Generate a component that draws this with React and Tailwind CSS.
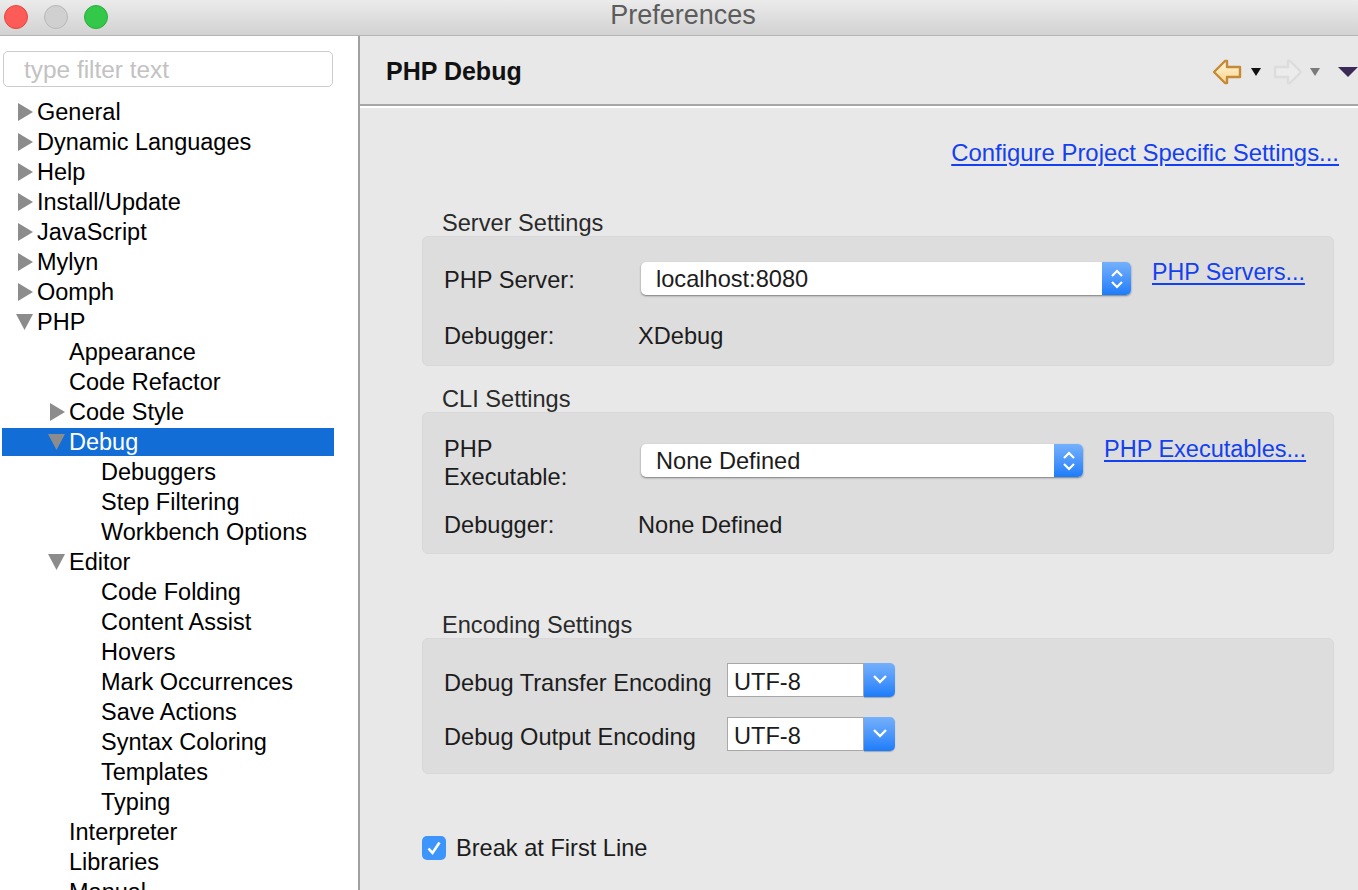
import React from 'react';

const TREE = [
  { label: 'General', depth: 0, arrow: 'right' },
  { label: 'Dynamic Languages', depth: 0, arrow: 'right' },
  { label: 'Help', depth: 0, arrow: 'right' },
  { label: 'Install/Update', depth: 0, arrow: 'right' },
  { label: 'JavaScript', depth: 0, arrow: 'right' },
  { label: 'Mylyn', depth: 0, arrow: 'right' },
  { label: 'Oomph', depth: 0, arrow: 'right' },
  { label: 'PHP', depth: 0, arrow: 'down' },
  { label: 'Appearance', depth: 1 },
  { label: 'Code Refactor', depth: 1 },
  { label: 'Code Style', depth: 1, arrow: 'right' },
  { label: 'Debug', depth: 1, arrow: 'down', selected: true },
  { label: 'Debuggers', depth: 2 },
  { label: 'Step Filtering', depth: 2 },
  { label: 'Workbench Options', depth: 2 },
  { label: 'Editor', depth: 1, arrow: 'down' },
  { label: 'Code Folding', depth: 2 },
  { label: 'Content Assist', depth: 2 },
  { label: 'Hovers', depth: 2 },
  { label: 'Mark Occurrences', depth: 2 },
  { label: 'Save Actions', depth: 2 },
  { label: 'Syntax Coloring', depth: 2 },
  { label: 'Templates', depth: 2 },
  { label: 'Typing', depth: 2 },
  { label: 'Interpreter', depth: 1 },
  { label: 'Libraries', depth: 1 },
  { label: 'Manual', depth: 1 },
];

const INDENT = ['pl-[14px]', 'pl-[46px]', 'pl-[78px]'];

function Arrow({ dir }) {
  return (
    <svg width="18" height="18" viewBox="0 0 18 18" className="shrink-0">
      {dir === 'right' && <path d="M2 0 L17 9 L2 18 Z" fill="#8c8c8c" />}
      {dir === 'down' && <path d="M0 1 L17 1 L8.5 17 Z" fill="#8c8c8c" />}
    </svg>
  );
}

function TreeRow({ item }) {
  const tone = item.selected ? 'bg-[#136dd6] text-white' : 'text-black';
  return (
    <div className="h-[30px] py-px">
      <div className={`h-[28px] flex items-center gap-[3px] text-[23.5px] ${INDENT[item.depth]} ${tone}`}>
        {item.arrow ? <Arrow dir={item.arrow} /> : <div className="w-[18px] shrink-0" />}
        <span>{item.label}</span>
      </div>
    </div>
  );
}

function Stepper({ width }) {
  return (
    <div className={`${width} h-full rounded-r-[5px] bg-gradient-to-b from-[#74b0fb] to-[#1a7cfa] flex items-center justify-center shrink-0`}>
      <svg width="14" height="24" viewBox="0 0 14 24" fill="none" stroke="white" strokeWidth="2.2">
        <path d="M2 9 L7 4 L12 9" />
        <path d="M2 15 L7 20 L12 15" />
      </svg>
    </div>
  );
}

function PopupSelect({ value, width }) {
  return (
    <div className={`${width} h-[33px] flex rounded-[5px] bg-white shadow-[0_1px_2px_rgba(0,0,0,0.45)] shrink-0`}>
      <div className="flex-1 pl-[15px] flex items-center text-[#1c1c1c]">{value}</div>
      <Stepper width="w-[29px]" />
    </div>
  );
}

function ComboSelect({ value }) {
  return (
    <div className="w-[168px] h-[34px] flex">
      <div className="flex-1 pl-[6px] pt-[4px] flex items-center bg-white border border-[#a8a8a8] text-[#1c1c1c]">{value}</div>
      <div className="w-[31px] rounded-r-[5px] bg-gradient-to-b from-[#74b0fb] to-[#1a7cfa] flex items-center justify-center shadow-[0_1px_1px_rgba(0,0,0,0.25)]">
        <svg width="16" height="12" viewBox="0 0 16 12" fill="none" stroke="white" strokeWidth="2.4" className="-mt-[3px]">
          <path d="M2 3 L8 9 L14 3" />
        </svg>
      </div>
    </div>
  );
}

function Group({ title, height, className, children }) {
  return (
    <section className={className}>
      <h3 className="h-[30px] pl-[20px] leading-[30px] text-[#2a2a2a] font-normal mb-[-2px]">{title}</h3>
      <div className={`${height} rounded-[6px] bg-[#dddddd] border border-[#d8d8d8] pl-[21px]`}>{children}</div>
    </section>
  );
}

function Link({ className, children }) {
  return <a className={`text-[#1340f0] underline underline-offset-[3px] ${className}`}>{children}</a>;
}

export default function App() {
  return (
    <div className="w-[1358px] h-[890px] overflow-hidden bg-[#e8e8e8] flex flex-col text-[23.6px] leading-[30px] font-['Liberation_Sans',Arial,sans-serif]">
      {/* Title bar */}
      <div className="h-[36px] shrink-0 flex items-center relative bg-gradient-to-b from-[#ebebeb] to-[#d2d2d2] border-b border-[#b4b4b4]">
        <div className="flex gap-[16px] pl-[4px] pb-[2px]">
          <div className="w-[24px] h-[24px] rounded-full bg-[#fc5b57] border border-[#e2463f]" />
          <div className="w-[24px] h-[24px] rounded-full bg-[#d0d0d0] border border-[#b8b8b8]" />
          <div className="w-[24px] h-[24px] rounded-full bg-[#34c84a] border border-[#2aac3c]" />
        </div>
        <div className="absolute inset-0 flex items-center justify-center text-[27px] text-[#5c5c5c] pb-[6px] pl-[8px]">Preferences</div>
      </div>

      <div className="flex flex-1 min-h-0">
        {/* Sidebar */}
        <aside className="w-[360px] shrink-0 bg-white border-r-[2px] border-r-[#a0a0a0] overflow-hidden">
          <div className="mt-[15px] ml-[3px] w-[330px] h-[36px] rounded-[5px] border border-[#cccccc] pl-[20px] pt-[1px] flex items-center text-[24.4px] text-[#c2c2c2]">
            type filter text
          </div>
          <div className="mt-[10px] ml-[2px] w-[332px]">
            {TREE.map((item) => <TreeRow key={item.label} item={item} />)}
          </div>
        </aside>

        {/* Main panel */}
        <main className="flex-1 min-w-0 flex flex-col">
          <div className="h-[70px] shrink-0 flex items-center justify-between pl-[26px] border-b-[2px] border-b-[#a6a6a6]">
            <h1 className="text-[25px] font-bold text-[#111] mt-[1px]">PHP Debug</h1>
            <div className="flex items-center mt-[3px]">
              <svg width="30" height="26" viewBox="0 0 30 26">
                <defs>
                  <linearGradient id="back" x1="0" y1="0" x2="0" y2="1">
                    <stop offset="0" stopColor="#fff6d8" />
                    <stop offset="1" stopColor="#f9d58c" />
                  </linearGradient>
                </defs>
                <path d="M13 2 L2 13 L13 24 L15 24 L15 18 L28 18 L28 8 L15 8 L15 2 Z" fill="url(#back)" stroke="#c48a38" strokeWidth="2.4" strokeLinejoin="round" />
              </svg>
              <svg width="10" height="8" viewBox="0 0 10 8" className="ml-[9px]"><path d="M0 0 H10 L5 8 Z" fill="#111" /></svg>
              <svg width="30" height="26" viewBox="0 0 30 26" className="ml-[12px]">
                <path d="M17 2 L28 13 L17 24 L15 24 L15 18 L2 18 L2 8 L15 8 L15 2 Z" fill="#ececec" stroke="#dcdcdc" strokeWidth="2.4" strokeLinejoin="round" />
              </svg>
              <svg width="10" height="8" viewBox="0 0 10 8" className="ml-[7px]"><path d="M0 0 H10 L5 8 Z" fill="#7a7a7a" /></svg>
              <svg width="20" height="10" viewBox="0 0 20 10" className="ml-[18px]"><path d="M0 0 H20 L10 10 Z" fill="#3a2a55" /></svg>
            </div>
          </div>
          <div className="h-[2px] shrink-0 bg-white" />

          <div className="flex-1 pl-[62px] pr-[24px]">
            <div className="flex justify-end mt-[30px] h-[30px] -mr-[5px]">
              <Link className="text-[23.9px]">Configure Project Specific Settings...</Link>
            </div>

            <Group title="Server Settings" height="h-[130px]" className="mt-[40px]">
              <div className="flex mt-[25px] h-[33px] items-center">
                <div className="w-[197px] pt-[2px] text-[#1c1c1c]">PHP Server:</div>
                <PopupSelect value="localhost:8080" width="w-[490px]" />
                <div className="ml-[21px] -mt-[13px]"><Link className="text-[23.2px]">PHP Servers...</Link></div>
              </div>
              <div className="flex mt-[26px] text-[#1c1c1c]">
                <div className="w-[194px]">Debugger:</div>
                <div>XDebug</div>
              </div>
            </Group>

            <Group title="CLI Settings" height="h-[142px]" className="mt-[18px]">
              <div className="flex mt-[22px]">
                <div className="w-[197px] leading-[28px] text-[#1c1c1c]">PHP<br />Executable:</div>
                <div className="mt-[9px]"><PopupSelect value="None Defined" width="w-[442px]" /></div>
                <div className="ml-[21px] -mt-[1px]"><Link className="text-[23.5px]">PHP Executables...</Link></div>
              </div>
              <div className="flex mt-[19px] text-[#1c1c1c]">
                <div className="w-[194px]">Debugger:</div>
                <div>None Defined</div>
              </div>
            </Group>

            <Group title="Encoding Settings" height="h-[136px]" className="mt-[56px]">
              <div className="flex items-center mt-[23px] text-[#1c1c1c]">
                <div className="w-[283px] pt-[6px]">Debug Transfer Encoding</div>
                <ComboSelect value="UTF-8" />
              </div>
              <div className="flex items-center mt-[18px] text-[#1c1c1c]">
                <div className="w-[283px] pt-[6px]">Debug Output Encoding</div>
                <ComboSelect value="UTF-8" />
              </div>
            </Group>

            <div className="flex items-center gap-[10px] mt-[59px] text-[#1c1c1c]">
              <div className="w-[24px] h-[24px] rounded-[5px] bg-[#3d95fb] flex items-center justify-center">
                <svg width="16" height="16" viewBox="0 0 16 16" fill="none" stroke="white" strokeWidth="2.6">
                  <path d="M2.5 8.5 L6.5 13 L13.5 2.5" />
                </svg>
              </div>
              <span>Break at First Line</span>
            </div>
          </div>
        </main>
      </div>
    </div>
  );
}
